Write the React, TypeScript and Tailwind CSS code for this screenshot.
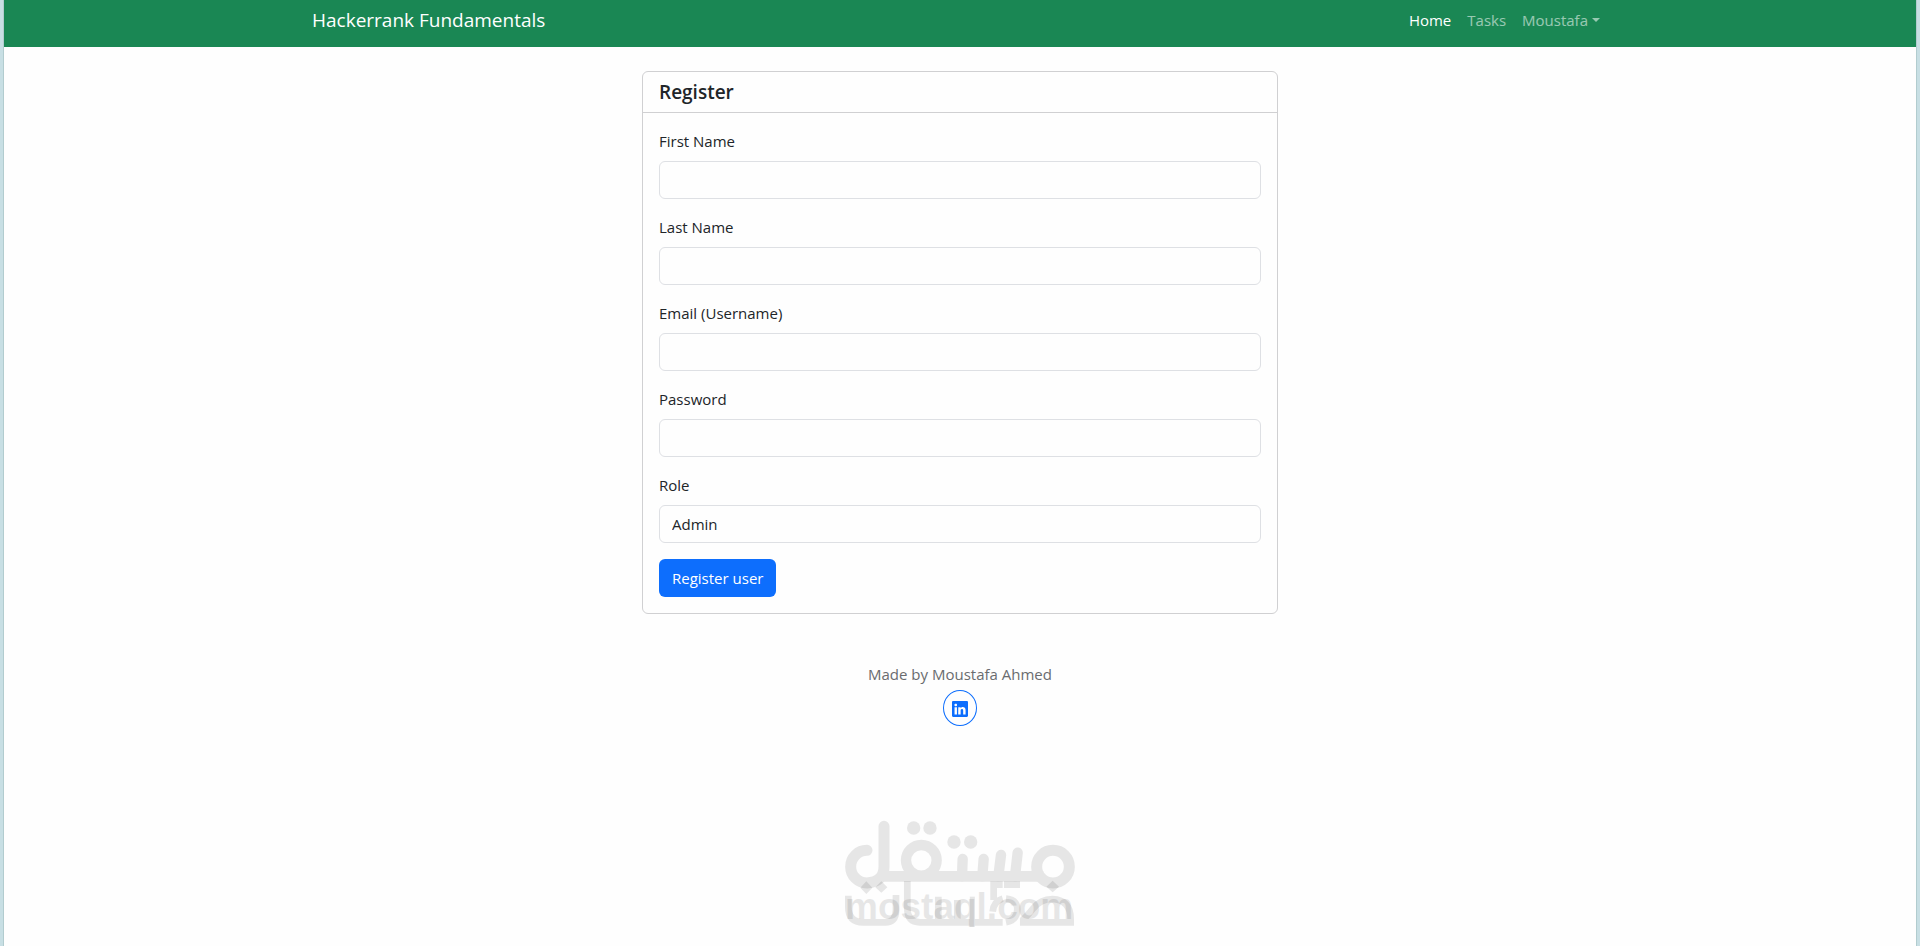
import { useState } from 'react';
import { BsLinkedin } from 'react-icons/bs';

const fields = [
  { id: 'firstName', label: 'First Name', type: 'text' },
  { id: 'lastName', label: 'Last Name', type: 'text' },
  { id: 'email', label: 'Email (Username)', type: 'email' },
  { id: 'password', label: 'Password', type: 'password' },
];

function Navbar() {
  return (
    <header className="bg-[#1a8754] pb-2">
      <nav className="mx-auto flex h-[39px] max-w-[1320px] items-center justify-between pr-5 pl-3">
        <a href="#" className="text-[19px] text-white">Hackerrank Fundamentals</a>
        <div className="flex items-center gap-4 text-white/55">
          <a href="#" className="text-white">Home</a>
          <a href="#tasks">Tasks</a>
          <button type="button" className="flex items-center gap-1">
            Moustafa
            <span className="border-x-4 border-t-4 border-x-transparent border-t-current" />
          </button>
        </div>
      </nav>
    </header>
  );
}

// Each layer is translucent on its own so that overlaps come out darker
function Watermark() {
  return (
    <svg viewBox="0 0 230 107" className="mx-auto mt-[94px] w-[230px]" role="img" aria-label="mostaql.com">
      <g opacity="0.09" fill="none" stroke="#000" transform="scale(0.33333) translate(-75 -60)">
        <path d="M141 151A49 49 0 0 0 92 200A49 49 0 0 0 141 249Q192 245 192 200V79" strokeWidth="33" strokeLinecap="round" />
        <path d="M180 229H670" strokeWidth="32" />
        <circle cx="304" cy="181" r="46" strokeWidth="31" />
        <circle cx="699" cy="200" r="49" strokeWidth="33" />
        <path d="M428 177L426 229M491 177L487 229M543 165L535 229M593 158L585 229" strokeWidth="31" strokeLinecap="round" />
        <g fill="#000" stroke="none">
          <circle cx="281" cy="84" r="20" />
          <circle cx="330" cy="84" r="20" />
          <circle cx="402" cy="126" r="20" />
          <circle cx="452" cy="126" r="20" />
        </g>
      </g>
      <g opacity="0.09" fill="none" stroke="#000" strokeWidth="20" transform="scale(0.33333) translate(-75 -60)">
        <path d="M139 244L157 263L139 282L121 263ZM184 244L202 262L184 278L166 262ZM698 242L717 260L698 277L679 260Z" fill="#000" stroke="none" />
        <path d="M85 287V320Q85 367 130 367H195Q228 367 228 330V285" />
        <path d="M262 243V325Q262 367 300 367H548" />
        <path d="M355 290V360M412 300V360" />
        <path d="M457 290V380" strokeWidth="15" />
        <path d="M521 300V254H548M552 254H600" />
        <path d="M518 335Q521 304 548 296M558 296Q592 300 592 328Q592 360 558 367" />
        <path d="M600 367H762" />
        <path d="M606 362Q625 345 640 325Q662 297 697 297Q752 300 752 357" />
      </g>
      <text
        x="0"
        y="99"
        fill="#000"
        opacity="0.09"
        className="font-['Liberation_Sans',sans-serif] text-[37px] font-bold"
      >
        mostaql.com
      </text>
    </svg>
  );
}

export default function App() {
  const [role, setRole] = useState('Admin');

  return (
    <div className="border-x-[3px] border-[#c8dfe4] font-['Open_Sans',sans-serif] text-[15px] leading-6 text-[#212529]">
      <div className="min-h-screen border-x border-[#b2cccf] bg-[#fefefe]">
        <Navbar />

        <main className="mx-auto mt-6 max-w-[636px] rounded-md border border-[#d0d0d2]">
          <h1 className="border-b border-[#d0d0d2] px-4 py-2 text-[19px] leading-6 font-semibold">Register</h1>
          <form className="p-4" onSubmit={(e) => e.preventDefault()}>
            {fields.map((f) => (
              <div key={f.id} className="mb-4">
                <label htmlFor={f.id} className="mb-2 block">{f.label}</label>
                <input
                  id={f.id}
                  type={f.type}
                  className="block h-[38px] w-full rounded-md border border-[#dee0e4] px-3"
                />
              </div>
            ))}
            <div className="mb-4">
              <label htmlFor="role" className="mb-2 block">Role</label>
              <select
                id="role"
                value={role}
                onChange={(e) => setRole(e.target.value)}
                className="block h-[38px] w-full appearance-none rounded-md border border-[#dee0e4] px-3"
              >
                <option>Admin</option>
              </select>
            </div>
            <button type="submit" className="block h-[38px] rounded-md bg-[#0d6efd] px-[13px] text-white">
              Register user
            </button>
          </form>
        </main>

        <footer className="mt-12 flex flex-col items-center gap-1">
          <p className="text-[#6a6c6f]">Made by Moustafa Ahmed</p>
          <a
            href="#linkedin"
            aria-label="LinkedIn"
            className="flex h-9 w-[34px] items-center justify-center rounded-[50%] border border-[#0d6efd] pt-px text-base text-[#0d6efd]"
          >
            <BsLinkedin />
          </a>
        </footer>

        <Watermark />
      </div>
    </div>
  );
}
